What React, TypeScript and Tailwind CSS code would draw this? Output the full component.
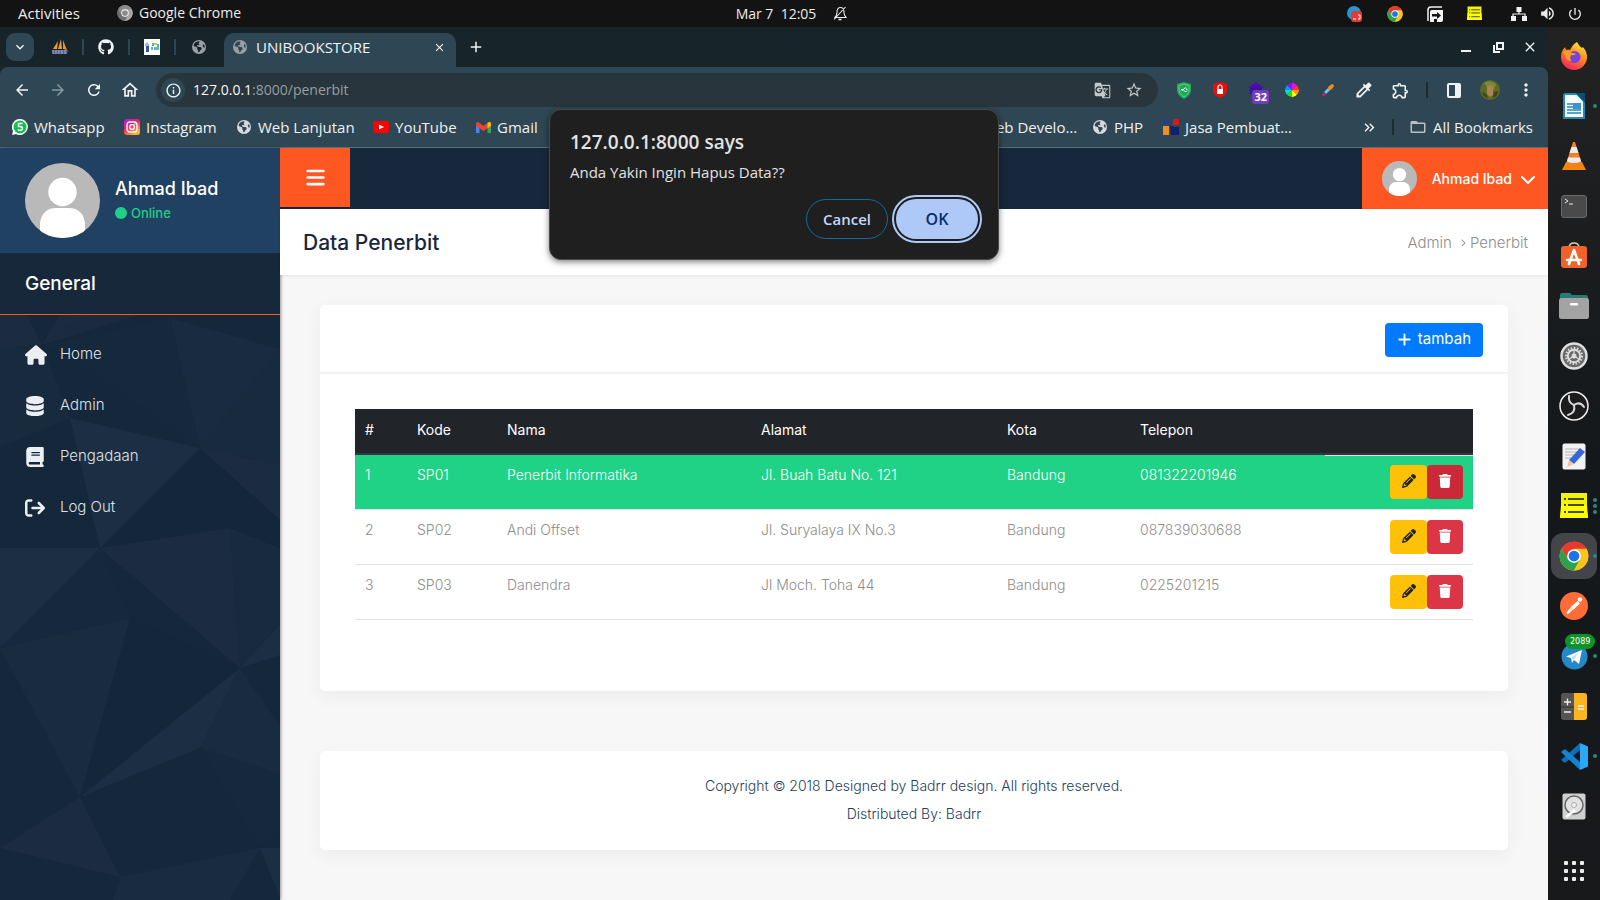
import React from "react";
import type { ReactNode } from "react";
import {
  FaHouse,
  FaDatabase,
  FaBook,
  FaArrowRightFromBracket,
  FaBars,
  FaPencil,
  FaTrash,
  FaPlus,
  FaChevronDown,
  FaGithub,
  FaEarthAmericas,
  FaChevronRight,
} from "react-icons/fa6";
import {
  MdArrowBack,
  MdArrowForward,
  MdRefresh,
  MdOutlineHome,
  MdInfoOutline,
  MdGTranslate,
  MdStarBorder,
  MdOutlineExtension,
  MdMoreVert,
  MdAdd,
  MdClose,
  MdExpandMore,
  MdKeyboardDoubleArrowRight,
  MdFolderOpen,
  MdPowerSettingsNew,
  MdVolumeUp,
  MdColorize,
} from "react-icons/md";

/* ---------- Small drawings ---------- */

function ChromeLogo({ size, mono = false }: { size: number; mono?: boolean }) {
  const red = mono ? "#8a8a8a" : "#e33b2e";
  const green = mono ? "#6f6f6f" : "#2ba24c";
  const yellow = mono ? "#a8a8a8" : "#fcc31e";
  const blue = mono ? "#8a8a8a" : "#1a73e8";
  return (
    <svg width={size} height={size} viewBox="0 0 48 48" aria-hidden="true">
      <circle cx="24" cy="24" r="23" fill={yellow} />
      <path d="M24 24 L4.1 12.5 A23 23 0 0 1 43.9 12.5 Z" fill={red} />
      <path d="M24 13 L43.9 12.5 A23 23 0 0 0 4.1 12.5 L14.5 29.5 Z" fill={red} />
      <path d="M4.1 12.5 A23 23 0 0 0 24 47 L33.5 29.5 L14.5 29.5 Z" fill={green} />
      <path d="M24 47 A23 23 0 0 0 43.9 12.5 L24 12.5 L33.5 29.5 Z" fill={yellow} />
      <circle cx="24" cy="24" r="11" fill="#fff" />
      <circle cx="24" cy="24" r="8.6" fill={blue} />
    </svg>
  );
}

function NotesLogo({ size }: { size: number }) {
  return (
    <svg width={size} height={size} viewBox="0 0 28 28" aria-hidden="true">
      <path d="M1 1h26v18l1 7H0l1-7z" fill="#f2f20a" />
      <path d="M1 13h26l1 13H0z" fill="#ffff00" />
      <path d="M8 7h16M8 13h16M8 20h16" stroke="#4b4b00" strokeWidth="1.8" />
      <path d="M4 7h2M4 13h2M4 20h2" stroke="#4b4b00" strokeWidth="1.8" />
    </svg>
  );
}

function Avatar({ className }: { className: string }) {
  return (
    <svg className={className} viewBox="0 0 75 75" role="img" aria-label="Ahmad Ibad">
      <defs>
        <clipPath id="avatar-clip">
          <circle cx="37.500" cy="37.500" r="37.500" />
        </clipPath>
      </defs>
      <g clipPath="url(#avatar-clip)">
        <rect width="75" height="75" fill="#b9b9b9" />
        <circle cx="37.500" cy="29" r="14.200" fill="#fff" />
        <path d="M15 75V62C15 51 22 45 31 45h13c9 0 16 6 16 17v13z" fill="#fff" />
      </g>
    </svg>
  );
}

function SidebarFacets() {
  return (
    <svg
      className="absolute inset-0 h-full w-full"
      viewBox="0 0 280 585"
      preserveAspectRatio="xMidYMin slice"
      aria-hidden="true"
    >
      <rect width="280" height="585" fill="#15273b" />
      <g fill="#182a3e">
        <path d="M83 0H140L42 30Z" fill="#1a2b40" />
        <path d="M42 30L70 103L0 132V32Z" />
        <path d="M280 34V150L200 133Z" />
        <path d="M170 3L200 133L75 45L42 30Z" fill="#16283c" />
        <path d="M230 213L280 233V309L240 353Z" />
        <path d="M100 233L130 303L0 333Z" fill="#16283d" />
        <path d="M200 433L280 459V512L260 533Z" fill="#16283c" />
        <path d="M130 303L240 353L80 482Z" fill="#14263a" />
        <path d="M200 133L280 205V233L230 213L100 233Z" fill="#14263a" />
      </g>
      <g fill="#1b2c41">
        <path d="M0 0H27L42 30L0 32Z" />
        <path d="M60 0H83L42 30Z" />
        <path d="M170 3L280 34L200 133Z" fill="#192b40" />
        <path d="M70 103L200 133L100 233Z" fill="#1c2e43" />
        <path d="M200 133L280 150V205Z" />
        <path d="M0 233H100L0 333Z" fill="#1c2e43" />
        <path d="M0 333L130 303L80 482Z" fill="#192b3f" />
        <path d="M100 233L230 213L240 353Z" />
        <path d="M240 353L280 309V340Z" fill="#1c2e43" />
        <path d="M240 353L200 433L80 482Z" fill="#1c2e43" />
        <path d="M240 353L280 412V459L200 433Z" fill="#192b3f" />
        <path d="M80 482L120 562L0 533Z" />
        <path d="M120 562L260 533L230 585H113Z" fill="#192b3f" />
        <path d="M260 533H280V582Z" fill="#1c2e43" />
      </g>
    </svg>
  );
}

/* ---------- Desktop top bar ---------- */

function TopBar() {
  return (
    <header className="flex h-[27px] items-center bg-[#131313] text-sm text-[#ececec]">
      <div className="flex flex-1 items-center">
        <button className="w-[98px] text-center text-[15px]">Activities</button>
        <button className="ml-[19px] flex items-center gap-[6px]">
          <ChromeLogo size={16} mono />
          Google Chrome
        </button>
      </div>
      <div className="flex items-center gap-[17px]">
        <button className="whitespace-pre">Mar 7  12:05</button>
        <svg width="14" height="15" viewBox="0 0 14 15" fill="none" stroke="#ececec" aria-hidden="true">
          <path d="M2 11.500q2-2 2-5 0-5 3.500-5T11 6.500q0 3 2 5zM1 13.500L12.500 1" strokeWidth="1.100" />
          <path d="M5.500 13.500h3" strokeWidth="1.600" />
        </svg>
      </div>
      <div className="flex flex-1 items-center justify-end pr-[17px]">
        <svg width="16" height="16" viewBox="0 0 16 16" aria-hidden="true">
          <circle cx="7" cy="7" r="7" fill="#2b95cf" />
          <rect x="4" y="5" width="11" height="11" rx="3" fill="#e53935" />
          <path d="M6 13h3M11 9h2v4h-2" stroke="#fff" fill="none" />
        </svg>
        <span className="ml-[24px]"><ChromeLogo size={16} /></span>
        <svg className="ml-[24px]" width="16" height="16" viewBox="0 0 16 16" aria-hidden="true">
          <path d="M1 15V4q0-3 3-3h11" fill="none" stroke="#f2f2f2" strokeWidth="1.500" />
          <path d="M3 16V6q0-2 2-2h11v10q0 2-2 2h-4v-3H7v3z" fill="#f2f2f2" />
          <path d="M5 8h5V6l4 3.500-4 3.500v-2.500H5z" fill="#131313" />
        </svg>
        <span className="ml-[24px]"><NotesLogo size={15} /></span>
        <svg className="ml-[29px]" width="16" height="16" viewBox="0 0 16 16" fill="#f2f2f2" aria-hidden="true">
          <rect x="5.500" y="1" width="5" height="5" />
          <rect x="0" y="10" width="5" height="5" />
          <rect x="11" y="10" width="5" height="5" />
          <path d="M2 11V8h12v3M8 5v3" fill="none" stroke="#f2f2f2" strokeWidth="1.200" />
        </svg>
        <MdVolumeUp className="ml-[12px]" size={17} />
        <MdPowerSettingsNew className="ml-[11px]" size={16} />
      </div>
    </header>
  );
}

/* ---------- Browser chrome ---------- */

function PinnedDivider() {
  return <span className="h-4 w-[2px] bg-[#2f4754]" />;
}

function TabStrip() {
  return (
    <div className="flex h-10 items-center bg-[#17242a] pl-[6px] pr-[2px] text-[#f0f3f4]">
      <button aria-label="Search tabs" className="flex size-7 items-center justify-center rounded-[9px] bg-[#2f4754]">
        <MdExpandMore size={16} />
      </button>
      <div className="flex h-full items-center pl-[17px]">
        <button aria-label="phpMyAdmin" className="w-[18px]">
          <svg width="18" height="18" viewBox="0 0 18 18" aria-hidden="true">
            <path d="M7 3L2 11h4zM10 1L7 11h4z" fill="#f29a2e" />
            <path d="M12 2l4 10-4-1z" fill="#e8922a" />
            <path d="M1 12h16l-1 4H2z" fill="#59648f" />
            <path d="M2 12v4M5 12v4M8 12v4M11 12v4M14 12v4" stroke="#a3adcb" />
          </svg>
        </button>
        <span className="w-[13px]" />
        <PinnedDivider />
        <button aria-label="GitHub" className="flex w-[44px] justify-center"><FaGithub size={16} /></button>
        <PinnedDivider />
        <button aria-label="School site" className="flex w-[44px] justify-center">
          <svg width="16" height="16" viewBox="0 0 16 16" aria-hidden="true">
            <rect width="16" height="16" fill="#fff" />
            <path d="M1 5l2-2 2 2v2H1z" fill="#8ec5d8" />
            <path d="M2 7h3v6H2z" fill="#35559b" />
            <path d="M8 4h2v3H8zM13 5h2v3h-2z" fill="#3cb4e5" />
            <path d="M7 8h2v3H7zM10 8h5v3h-5z" fill="#63b9ad" />
            <path d="M10 4h3v2h-3z" fill="#c8d84a" />
          </svg>
        </button>
        <PinnedDivider />
        <button aria-label="Local page" className="flex w-[46px] justify-center text-[#9aa0a6]"><FaEarthAmericas size={14} /></button>
      </div>
      <div className="ml-[2px] mt-[6px] flex h-[34px] w-[232px] items-center rounded-t-[10px] bg-[#2f4754] pb-[6px] pl-[9px] pr-[10px]">
        <FaEarthAmericas size={14} className="text-[#9aa0a6]" />
        <span className="ml-[9px] flex-1 text-[15px]">UNIBOOKSTORE</span>
        <button aria-label="Close tab"><MdClose size={13} /></button>
      </div>
      <button aria-label="New tab" className="ml-[11px]"><MdAdd size={18} /></button>
      <div className="ml-auto flex items-center">
        <button aria-label="Minimize" className="flex w-8 justify-center">
          <svg width="10" height="12" viewBox="0 0 10 12" aria-hidden="true"><path d="M0 10h10" stroke="#f0f3f4" strokeWidth="2" /></svg>
        </button>
        <button aria-label="Restore" className="flex w-8 justify-center">
          <svg width="11" height="11" viewBox="0 0 11 11" fill="none" stroke="#f0f3f4" strokeWidth="2" aria-hidden="true">
            <path d="M4 1h6v6H4zM1 3v7h6" />
          </svg>
        </button>
        <button aria-label="Close window" className="flex w-8 justify-center"><MdClose size={16} /></button>
      </div>
    </div>
  );
}

function ToolButton({ label, children, dim = false }: { label: string; children: ReactNode; dim?: boolean }) {
  return (
    <button aria-label={label} className={dim ? "flex w-9 justify-center text-[#8b989f]" : "flex w-9 justify-center text-[#f0f3f4]"}>
      {children}
    </button>
  );
}

function Toolbar() {
  return (
    <div className="flex h-[46px] items-center pl-1 pr-1">
      <ToolButton label="Back"><MdArrowBack size={18} /></ToolButton>
      <ToolButton label="Forward" dim><MdArrowForward size={18} /></ToolButton>
      <ToolButton label="Reload"><MdRefresh size={18} /></ToolButton>
      <ToolButton label="Home"><MdOutlineHome size={20} /></ToolButton>
      <div className="ml-2 flex h-[34px] flex-1 items-center rounded-full bg-[#28353c] pl-[5px] pr-[15px] text-sm">
        <span className="flex size-6 items-center justify-center rounded-full bg-[#2f4754] text-[#f0f3f4]">
          <MdInfoOutline size={17} />
        </span>
        <span className="ml-2 flex-1 text-[#959fa4]">
          <span className="text-[#f5f7f7]">127.0.0.1</span>:8000/penerbit
        </span>
        <button aria-label="Translate this page" className="mr-[14px] text-[#c3c7c9]"><MdGTranslate size={17} /></button>
        <button aria-label="Bookmark this tab" className="text-[#c3c7c9]"><MdStarBorder size={18} /></button>
      </div>
      <div className="ml-2 flex items-center">
        <ToolButton label="Safe web">
          <svg width="14" height="17" viewBox="0 0 14 17" aria-hidden="true">
            <path d="M7 0l7 2v6c0 4-3 7-7 9C3 15 0 12 0 8V2z" fill="#1fa856" />
            <path d="M7 2l5 1.500V8c0 3-2 5-5 7-3-2-5-4-5-7V3.500z" fill="none" stroke="#7fd6a0" strokeWidth="0.700" />
            <path d="M4 8.500q1.500-3 3 0t3 0M4 7q1.500 3 3 0t3 1" fill="none" stroke="#fff" />
          </svg>
        </ToolButton>
        <ToolButton label="Blocker">
          <svg width="14" height="16" viewBox="0 0 14 16" aria-hidden="true">
            <path d="M7 0l7 2v6c0 4-3 6-7 8C3 14 0 12 0 8V2z" fill="#ec0c0c" />
            <rect x="4" y="7" width="6" height="5" fill="#fff" />
            <path d="M5 7V5a2 2 0 0 1 4 0v2" fill="none" stroke="#fff" strokeWidth="1.200" />
          </svg>
        </ToolButton>
        <ToolButton label="Extension with 32 items">
          <span className="relative block size-4">
            <svg width="16" height="16" viewBox="0 0 16 16" aria-hidden="true">
              <path d="M8 0l8 6H0z" fill="#4b0db0" />
              <path d="M2 6h12v6H2z" fill="#3b1390" />
            </svg>
            <span className="absolute -right-[5px] top-2 rounded-[3px] bg-[#6f3cc4] px-[2px] text-[11px] font-bold leading-[14px] text-white">32</span>
          </span>
        </ToolButton>
        <ToolButton label="Colour wheel">
          <svg width="16" height="16" viewBox="0 0 16 16" aria-hidden="true">
            <path d="M8 8V0L13 3Z" fill="#f0f" /><path d="M8 8l5-5 3 5z" fill="#f33" />
            <path d="M8 8h8l-3 5z" fill="#f90" /><path d="M8 8l5 5-5 3z" fill="#ff0" />
            <path d="M8 8v8l-5-3z" fill="#2d2" /><path d="M8 8l-5 5-3-5z" fill="#0dc" />
            <path d="M8 8H0l3-5z" fill="#09f" /><path d="M8 8L3 3l5-3z" fill="#62f" />
            <circle cx="8" cy="8" r="7.500" fill="none" stroke="#2f4754" />
          </svg>
        </ToolButton>
        <ToolButton label="Colour picker">
          <svg width="14" height="14" viewBox="0 0 14 14" aria-hidden="true">
            <path d="M1 13l1-3 3 2z" fill="#e4156f" /><path d="M2 10l3 2-3 1z" fill="#e4156f" />
            <path d="M3 9l4-4 2 2-4 4z" fill="#74c5ef" /><path d="M7 4l4-3 2 1-1 3-4 3z" fill="#f58a1f" />
          </svg>
        </ToolButton>
        <ToolButton label="Eyedropper"><MdColorize size={20} /></ToolButton>
        <ToolButton label="Extensions"><MdOutlineExtension size={19} /></ToolButton>
        <span className="mx-2 h-4 w-[2px] bg-[#1c2b32]" />
        <ToolButton label="Side panel">
          <svg width="14" height="15" viewBox="0 0 14 15" aria-hidden="true">
            <rect x="1" y="1" width="12" height="13" rx="1" fill="none" stroke="#f0f3f4" strokeWidth="2" />
            <path d="M8 1h5v13H8z" fill="#f0f3f4" />
          </svg>
        </ToolButton>
        <ToolButton label="Profile">
          <svg width="20" height="20" viewBox="0 0 20 20" aria-hidden="true">
            <circle cx="10" cy="10" r="10" fill="#5d6b24" />
            <path d="M4 3q6-4 12 1l-2 6-7-3z" fill="#7d8a35" />
            <path d="M7 6l3-1 3 2v8l-3 2-3-3z" fill="#a98554" />
            <path d="M2 12l4 2 2 4q-5-1-6-6zM14 12l4-1q0 5-5 7z" fill="#39451a" />
          </svg>
        </ToolButton>
        <ToolButton label="Menu"><MdMoreVert size={20} /></ToolButton>
      </div>
    </div>
  );
}

function Globe() {
  return <FaEarthAmericas size={14} className="text-[#d5dadd]" />;
}

function Bookmark({ icon, children, width }: { icon: ReactNode; children: ReactNode; width: string }) {
  return (
    <a href="#" className={`flex items-center gap-[6px] whitespace-nowrap ${width}`}>
      <span className="flex w-4 justify-center">{icon}</span>
      {children}
    </a>
  );
}

function BookmarksBar() {
  return (
    <nav aria-label="Bookmarks" className="flex h-[35px] items-center border-b border-[#58707b] pb-[6px] pl-3 pr-[15px] text-[15px] text-[#eef1f2]">
      <Bookmark
        width="w-[112px]"
        icon={
          <svg width="16" height="16" viewBox="0 0 16 16" aria-hidden="true">
            <path d="M8 0a8 8 0 1 1-4 15L0 16l1-4A8 8 0 0 1 8 0z" fill="#fff" />
            <circle cx="8" cy="8" r="6.500" fill="#14bf4b" />
            <path d="M10.500 4.500h-4V7.500q4-.5 4 2T6 11" fill="none" stroke="#fff" strokeWidth="1.500" />
          </svg>
        }
      >
        Whatsapp
      </Bookmark>
      <Bookmark
        width="w-[112px]"
        icon={
          <svg width="16" height="16" viewBox="0 0 16 16" aria-hidden="true">
            <defs>
              <linearGradient id="ig" x1="0" y1="0" x2="0.600" y2="1">
                <stop offset="0" stopColor="#a020f0" /><stop offset="0.500" stopColor="#f4206a" /><stop offset="1" stopColor="#ffb52e" />
              </linearGradient>
            </defs>
            <rect width="16" height="16" rx="3" fill="url(#ig)" />
            <rect x="3" y="3" width="10" height="10" rx="3" fill="none" stroke="#fff" strokeWidth="1.400" />
            <circle cx="8" cy="8" r="2.400" fill="none" stroke="#fff" strokeWidth="1.400" />
            <circle cx="11" cy="5" r="0.700" fill="#fff" />
          </svg>
        }
      >
        Instagram
      </Bookmark>
      <Bookmark width="w-[137px]" icon={<Globe />}>Web Lanjutan</Bookmark>
      <Bookmark
        width="w-[102px]"
        icon={
          <svg width="16" height="12" viewBox="0 0 16 12" aria-hidden="true">
            <rect width="16" height="12" rx="3" fill="#f00" /><path d="M6 3.500v5L11 6z" fill="#fff" />
          </svg>
        }
      >
        YouTube
      </Bookmark>
      <Bookmark
        width="w-auto"
        icon={
          <svg width="15" height="11" viewBox="0 0 15 11" aria-hidden="true">
            <path d="M0 1h3.500v10H0z" fill="#4285f4" /><path d="M11.500 1H15v10h-3.500z" fill="#34a853" />
            <path d="M0 1.500Q1-1 3.500 1l4 3 4-3Q14-1 15 1.500V4L7.500 9 0 4z" fill="#ea4335" />
            <path d="M11.500 1Q14-1 15 1.500V4l-3.500 2.500z" fill="#fbbc04" />
          </svg>
        }
      >
        Gmail
      </Bookmark>
      <div className="ml-auto flex items-center">
        <Bookmark width="w-[132px]" icon={<Globe />}>Web Develo…</Bookmark>
        <Bookmark width="w-[71px]" icon={<Globe />}>PHP</Bookmark>
        <Bookmark
          width="w-[198px]"
          icon={
            <svg width="16" height="16" viewBox="0 0 16 16" aria-hidden="true">
              <path d="M0 1h6v4H0z" fill="#1d3c9b" /><path d="M10 0h6v6h-6z" fill="#dd1616" />
              <path d="M0 7h6v9H0z" fill="#f58b23" /><path d="M7 6l4 2h5v8H8z" fill="#0c2272" />
            </svg>
          }
        >
          Jasa Pembuat…
        </Bookmark>
        <button aria-label="More bookmarks" className="mr-[14px]"><MdKeyboardDoubleArrowRight size={17} /></button>
        <span className="mr-[15px] h-4 w-[2px] bg-[#1c2b32]" />
        <button className="flex items-center gap-[6px] whitespace-nowrap">
          <MdFolderOpen size={18} className="text-[#b9bfc2]" />
          All Bookmarks
        </button>
      </div>
    </nav>
  );
}

/* ---------- Web page ---------- */

const menu = [
  { label: "Home", icon: <FaHouse size={22} /> },
  { label: "Admin", icon: <FaDatabase size={20} /> },
  { label: "Pengadaan", icon: <FaBook size={20} /> },
  { label: "Log Out", icon: <FaArrowRightFromBracket size={20} /> },
];

function Sidebar() {
  return (
    <aside className="flex w-[280px] shrink-0 flex-col bg-[#15273b] text-white shadow-[1px_0_3px_rgba(0,0,0,0.4)]">
      <div className="flex h-[105px] items-center gap-[15px] bg-[#214162] pl-[25px]">
        <Avatar className="size-[75px]" />
        <div>
          <p className="text-lg font-medium leading-6">Ahmad Ibad</p>
          <p className="flex items-center gap-1 text-[13px] font-medium leading-6 text-[#20cf86]">
            <span className="size-3 rounded-full bg-[#20cf86]" />
            Online
          </p>
        </div>
      </div>
      <h2 className="flex h-[62px] items-center border-b border-[#ff5722] bg-[#17283b] pl-[25px] pt-[2px] text-[19px] font-medium">General</h2>
      <nav className="relative flex-1">
        <SidebarFacets />
        <ul className="relative pt-[14px]">
          {menu.map((item) => (
            <li key={item.label}>
              <a href="#" className="flex h-[51px] items-center pl-[25px] text-[15px] font-light text-[#dfe3e7]">
                <span className="w-[35px] text-[#eceff2]">{item.icon}</span>
                {item.label}
              </a>
            </li>
          ))}
        </ul>
      </nav>
    </aside>
  );
}

const rows = [
  { no: "1", kode: "SP01", nama: "Penerbit Informatika", alamat: "Jl. Buah Batu No. 121", kota: "Bandung", telepon: "081322201946", active: true },
  { no: "2", kode: "SP02", nama: "Andi Offset", alamat: "Jl. Suryalaya IX No.3", kota: "Bandung", telepon: "087839030688", active: false },
  { no: "3", kode: "SP03", nama: "Danendra", alamat: "Jl Moch. Toha 44", kota: "Bandung", telepon: "0225201215", active: false },
];

function PublisherTable() {
  return (
    <table className="w-full table-fixed border-collapse text-left text-sm">
      <colgroup>
        <col className="w-[52px]" />
        <col className="w-[90px]" />
        <col className="w-[254px]" />
        <col className="w-[246px]" />
        <col className="w-[133px]" />
        <col />
        <col className="w-[148px]" />
      </colgroup>
      <thead>
        <tr className="h-[45px] border-b-2 border-[#32383e] bg-[#212529] text-white">
          {["#", "Kode", "Nama", "Alamat", "Kota", "Telepon"].map((h) => (
            <th key={h} scope="col" className="px-[10px] pb-[2px] font-normal">{h}</th>
          ))}
          <td />
        </tr>
      </thead>
      <tbody>
        {rows.map((r) => (
          <tr
            key={r.no}
            className={
              r.active
                ? "h-[55px] border-b border-[#dee2e6] bg-[#20d286] align-top font-light text-white"
                : "h-[55px] border-b border-[#dee2e6] align-top font-light text-[#8d8d8d]"
            }
          >
            <td className="px-[10px] pt-[10px]">{r.no}</td>
            <td className="px-[10px] pt-[10px]">{r.kode}</td>
            <td className="px-[10px] pt-[10px]">{r.nama}</td>
            <td className="px-[10px] pt-[10px]">{r.alamat}</td>
            <td className="px-[10px] pt-[10px]">{r.kota}</td>
            <td className="px-[10px] pt-[10px]">{r.telepon}</td>
            <td className={r.active ? "px-[10px] pt-[10px] shadow-[inset_0_1px_0_#dee2e6]" : "px-[10px] pt-[10px]"}>
              <div className="flex justify-end">
                <button aria-label={`Edit ${r.nama}`} className="flex h-[34px] w-[37px] items-center justify-center rounded-[4px] bg-[#ffc107] pb-[2px] text-[#212529]">
                  <FaPencil size={14} />
                </button>
                <button
                  aria-label={`Hapus ${r.nama}`}
                  className={
                    r.active
                      ? "flex h-[34px] w-9 items-center justify-center rounded-[4px] bg-[#cb2838] pb-[2px] text-white"
                      : "flex h-[34px] w-9 items-center justify-center rounded-[4px] bg-[#dc3545] pb-[2px] text-white"
                  }
                >
                  <FaTrash size={14} />
                </button>
              </div>
            </td>
          </tr>
        ))}
      </tbody>
    </table>
  );
}

function Page() {
  return (
    <div className="flex flex-1 bg-[#f7f7f7] font-['Inter','Liberation_Sans',sans-serif]">
      <Sidebar />
      <div className="flex min-w-0 flex-1 flex-col">
        <div className="flex h-[61px] items-start bg-[#17283d]">
          <button aria-label="Toggle menu" className="flex h-[59px] w-[70px] items-center justify-center bg-[#ff5722] text-white">
            <FaBars size={21} />
          </button>
          <button className="ml-auto flex h-[61px] items-center bg-[#ff5722] pl-5 pr-3 text-sm font-medium text-white">
            <Avatar className="size-[35px]" />
            <span className="ml-[15px] mr-2">Ahmad Ibad</span>
            <FaChevronDown size={16} />
          </button>
        </div>
        <div className="flex h-[66px] items-center justify-between bg-white pl-[23px] pr-5 pt-[2px] shadow-[0_1px_3px_rgba(0,0,0,0.08)]">
          <h1 className="text-[21px] font-medium text-[#17283d]">Data Penerbit</h1>
          <p className="flex items-center text-[15px] font-light text-[#8d8d8d]">
            <a href="#">Admin</a>
            <FaChevronRight size={8} className="ml-[7px] mr-[3px]" />
            <span>Penerbit</span>
          </p>
        </div>
        <main className="px-10 pb-[50px] pt-[30px]">
          <section className="rounded-[5px] bg-white shadow-[0_5px_20px_rgba(0,0,0,0.05)]">
            <div className="flex h-[69px] items-center justify-end border-b-2 border-[#f2f2f2] pr-[25px] pt-[2px]">
              <button className="flex h-[34px] items-center gap-[6px] rounded-[4px] bg-[#007bff] px-3 text-[15px] text-white">
                <FaPlus size={15} />
                tambah
              </button>
            </div>
            <div className="px-[35px] pb-[71px] pt-[35px]">
              <PublisherTable />
            </div>
          </section>
          <footer className="mt-[60px] rounded-[5px] bg-white pb-[22px] pt-[21px] text-center text-sm font-light leading-7 text-[#1f3d60] shadow-[0_5px_20px_rgba(0,0,0,0.05)]">
            <p>Copyright © 2018 Designed by Badrr design. All rights reserved.</p>
            <p>Distributed By: Badrr</p>
          </footer>
        </main>
      </div>
    </div>
  );
}

function ConfirmDialog() {
  return (
    <div
      role="alertdialog"
      aria-labelledby="dialog-title"
      aria-describedby="dialog-text"
      className="absolute left-1/2 top-[82px] w-[450px] -translate-x-1/2 rounded-xl border border-[#47494a] bg-[#1f1f1f] px-5 pb-5 pt-5 text-[#e3e3e3] shadow-[0_2px_6px_rgba(0,0,0,0.5)]"
    >
      <h2 id="dialog-title" className="text-[19px] font-semibold leading-6">127.0.0.1:8000 says</h2>
      <p id="dialog-text" className="mt-2 text-[15px] leading-5">Anda Yakin Ingin Hapus Data??</p>
      <div className="mt-[17px] flex justify-end gap-2">
        <button className="h-10 w-[82px] rounded-full border border-[#0f6c99] text-[15px] font-semibold text-[#c4d7fb]">Cancel</button>
        <button className="h-10 w-[82px] rounded-full bg-[#aec9f8] text-base font-semibold text-[#062e6f] outline-2 outline-offset-2 outline-[#aec9f8]">OK</button>
      </div>
    </div>
  );
}

/* ---------- Dock ---------- */

const dock: { label: string; dots: number; active?: boolean; badge?: string; icon: ReactNode }[] = [
  {
    label: "Firefox",
    dots: 0,
    icon: (
      <svg width="28" height="28" viewBox="0 0 28 28" aria-hidden="true">
        <defs>
          <linearGradient id="fx" x1="0.800" y1="0" x2="0.300" y2="1">
            <stop offset="0" stopColor="#fff23a" /><stop offset="0.450" stopColor="#ff8a1f" /><stop offset="1" stopColor="#f0225e" />
          </linearGradient>
        </defs>
        <path d="M17 0q2 4 5 6l1-1q4 5 4 10a13 13 0 0 1-26 0Q1 9 5 5l1 3q2-1 4 0 3-6 7-8z" fill="url(#fx)" />
        <circle cx="14.500" cy="15" r="6" fill="#7542e5" />
        <path d="M3 10q5-3 9 1 3 0 4 1-3 2-5 1-2 4 1 6-6 0-7-5z" fill="#ff9a24" />
      </svg>
    ),
  },
  {
    label: "LibreOffice Writer",
    dots: 1,
    icon: (
      <svg width="26" height="28" viewBox="0 0 26 28" aria-hidden="true">
        <path d="M4 2h12l7 7v17H3V3z" fill="#f5fafc" stroke="#2687b8" strokeWidth="2" />
        <path d="M15 1h9v10z" fill="#0c4d74" />
        <path d="M6 12h6M6 15h6M6 18h14M6 21h14" stroke="#2687b8" strokeWidth="1.500" />
        <rect x="12" y="11" width="8" height="6" fill="#3a96c6" />
      </svg>
    ),
  },
  {
    label: "VLC",
    dots: 0,
    icon: (
      <svg width="26" height="28" viewBox="0 0 26 28" aria-hidden="true">
        <path d="M5 20h16l4 8H1z" fill="#f28410" />
        <path d="M12 0h2l7 22q-8 4-16 0z" fill="#f6821f" />
        <path d="M10.500 5h5l2 6h-9zM7 15.500h12l1 4q-7 3-14 0z" fill="#ececec" />
      </svg>
    ),
  },
  {
    label: "Terminal",
    dots: 0,
    icon: (
      <svg width="26" height="23" viewBox="0 0 26 23" aria-hidden="true">
        <rect x="0.500" y="0.500" width="25" height="22" rx="2.500" fill="#4a4a4a" stroke="#6a6a6a" />
        <path d="M4 4l3 2-3 2M8 9h4" fill="none" stroke="#e8e8e8" />
      </svg>
    ),
  },
  {
    label: "Ubuntu Software",
    dots: 0,
    icon: (
      <svg width="26" height="28" viewBox="0 0 26 28" aria-hidden="true">
        <path d="M8 6q0-5 5-5t5 5" fill="none" stroke="#e6c9a4" strokeWidth="1.500" />
        <rect y="4" width="26" height="22" rx="3" fill="#f0622a" />
        <path d="M13 8L8 22M13 8l5 14M6 18h14" fill="none" stroke="#fff" strokeWidth="2.600" strokeLinecap="round" />
      </svg>
    ),
  },
  {
    label: "Files",
    dots: 0,
    icon: (
      <svg width="30" height="26" viewBox="0 0 30 26" aria-hidden="true">
        <path d="M1 2q0-2 2-2h8l2 2h14q2 0 2 2v6H1z" fill="#277a75" />
        <rect y="5" width="30" height="21" rx="2.500" fill="#a3a3a3" />
        <rect x="11" y="10" width="8" height="2.500" rx="1" fill="#fff" />
      </svg>
    ),
  },
  {
    label: "Settings",
    dots: 0,
    icon: (
      <svg width="28" height="28" viewBox="0 0 28 28" aria-hidden="true">
        <circle cx="14" cy="14" r="12.500" fill="#686868" stroke="#dedede" strokeWidth="2.500" />
        <circle cx="14" cy="14" r="8" fill="none" stroke="#dcdcdc" strokeWidth="2" strokeDasharray="1.600 1.500" />
        <circle cx="14" cy="14" r="6.200" fill="none" stroke="#dcdcdc" strokeWidth="2" />
        <path d="M14 14V8M14 14l5 3M14 14l-5 3" stroke="#dcdcdc" strokeWidth="1.200" />
        <circle cx="14" cy="14" r="2.500" fill="#dcdcdc" />
      </svg>
    ),
  },
  {
    label: "OBS Studio",
    dots: 0,
    icon: (
      <svg width="30" height="30" viewBox="0 0 30 30" aria-hidden="true">
        <circle cx="15" cy="15" r="14" fill="#1c1b1d" stroke="#f0f0f0" strokeWidth="1.500" />
        <g fill="none" stroke="#d8d8d8" strokeWidth="2" strokeLinecap="round">
          <path d="M15 14q-6-2-5-9" /><path d="M15 14q6-4 10 2" /><path d="M15 14q2 8-6 10" />
        </g>
      </svg>
    ),
  },
  {
    label: "Text Editor",
    dots: 0,
    icon: (
      <svg width="24" height="27" viewBox="0 0 24 27" aria-hidden="true">
        <rect x="0.500" y="0.500" width="23" height="26" rx="2" fill="#f2f2f2" />
        <path d="M3 6h15M3 9h12M3 12h9M3 15h6" stroke="#b5b5b5" />
        <path d="M18 5l5 4-11 12-5-4z" fill="#3767d6" />
        <path d="M7 17l5 4-7 3z" fill="#e8c79b" />
      </svg>
    ),
  },
  { label: "Notes", dots: 3, icon: <NotesLogo size={28} /> },
  { label: "Google Chrome", dots: 1, active: true, icon: <ChromeLogo size={30} /> },
  {
    label: "Postman",
    dots: 0,
    icon: (
      <svg width="28" height="28" viewBox="0 0 28 28" aria-hidden="true">
        <circle cx="14" cy="14" r="14" fill="#ff6c37" />
        <circle cx="20" cy="7.500" r="2.300" fill="#fff" />
        <path d="M17.500 9l2.500 2.500-6.500 6-2.500-2.500z" fill="#fff" />
        <path d="M12 15l-5 6M14 16l-7 6" stroke="#fff" strokeWidth="1.200" />
      </svg>
    ),
  },
  {
    label: "Telegram",
    dots: 1,
    badge: "2089",
    icon: (
      <svg width="27" height="27" viewBox="0 0 27 27" aria-hidden="true">
        <circle cx="13.500" cy="13.500" r="13" fill="#2488c8" />
        <path d="M5 13.500L21 7l-3 14-5-4-2 3-1-5z" fill="#fff" />
        <path d="M10 15l7-5-4 7z" fill="#c5ddec" />
      </svg>
    ),
  },
  {
    label: "Calculator",
    dots: 0,
    icon: (
      <svg width="26" height="27" viewBox="0 0 26 27" aria-hidden="true">
        <rect width="26" height="27" rx="3" fill="#555" />
        <path d="M13 0h10q3 0 3 3v21q0 3-3 3H13z" fill="#fbb51f" />
        <path d="M3 9h7M6.500 5.500v7M3 19h7M17 13h6M17 16h6" stroke="#eee" strokeWidth="1.300" />
        <path d="M0 14h13" stroke="#333" />
      </svg>
    ),
  },
  {
    label: "Visual Studio Code",
    dots: 1,
    icon: (
      <svg width="27" height="27" viewBox="0 0 27 27" aria-hidden="true">
        <path d="M19 0v7L4 20l-4-3z" fill="#0e6fb8" />
        <path d="M0 9l4-3 15 13v8z" fill="#1484d0" />
        <path d="M19 0l8 3.500v20L19 27z" fill="#2aa7f5" />
      </svg>
    ),
  },
  {
    label: "Disks",
    dots: 0,
    icon: (
      <svg width="24" height="27" viewBox="0 0 24 27" aria-hidden="true">
        <rect x="0.500" y="0.500" width="23" height="26" rx="2" fill="#d0d0d0" />
        <circle cx="12" cy="12" r="9" fill="#e2e2e2" stroke="#666" strokeWidth="1.500" />
        <circle cx="12" cy="12" r="2.500" fill="#f2f2f2" stroke="#aaa" />
        <path d="M4 24l9-7" stroke="#fff" strokeWidth="2.500" />
      </svg>
    ),
  },
];

function Dock() {
  return (
    <aside aria-label="Dock" className="flex w-[52px] shrink-0 flex-col items-center bg-linear-to-b from-[#222222] via-[#14181b] to-[#17191b] pt-1">
      {dock.map((app) => (
        <div key={app.label} className="relative flex h-[50px] w-full items-center justify-center">
          <button
            aria-label={app.label}
            className={app.active ? "flex size-[46px] items-center justify-center rounded-xl bg-[#43454a]" : "flex size-[46px] items-center justify-center"}
          >
            {app.icon}
          </button>
          {app.badge && (
            <span className="absolute left-[17px] top-[3px] rounded-full bg-[#0f9324] px-[5px] font-['DejaVu_Sans',sans-serif] text-[8px] leading-[15px] text-white">
              {app.badge}
            </span>
          )}
          <span className="absolute inset-y-0 right-[3px] flex flex-col justify-center gap-[2px]">
            {Array.from({ length: app.dots }, (_, i) => (
              <span key={i} className="size-1 rounded-full bg-[#2f8581]" />
            ))}
          </span>
        </div>
      ))}
      <button aria-label="Show applications" className="mb-[19px] mt-auto grid grid-cols-3 gap-1">
        {Array.from({ length: 9 }, (_, i) => (
          <span key={i} className="size-1 rounded-[1px] bg-[#ededed]" />
        ))}
      </button>
    </aside>
  );
}

export default function App() {
  return (
    <div className="flex min-h-screen flex-col bg-[#131313] font-['Open_Sans','Noto_Sans',sans-serif]">
      <TopBar />
      <div className="flex flex-1">
        <div className="relative flex min-w-0 flex-1 flex-col">
          <TabStrip />
          <div className="bg-[#17242a]">
            <div className="rounded-t-[8px] bg-[#2f4754]">
              <Toolbar />
              <BookmarksBar />
            </div>
          </div>
          <Page />
          <ConfirmDialog />
        </div>
        <Dock />
      </div>
    </div>
  );
}
